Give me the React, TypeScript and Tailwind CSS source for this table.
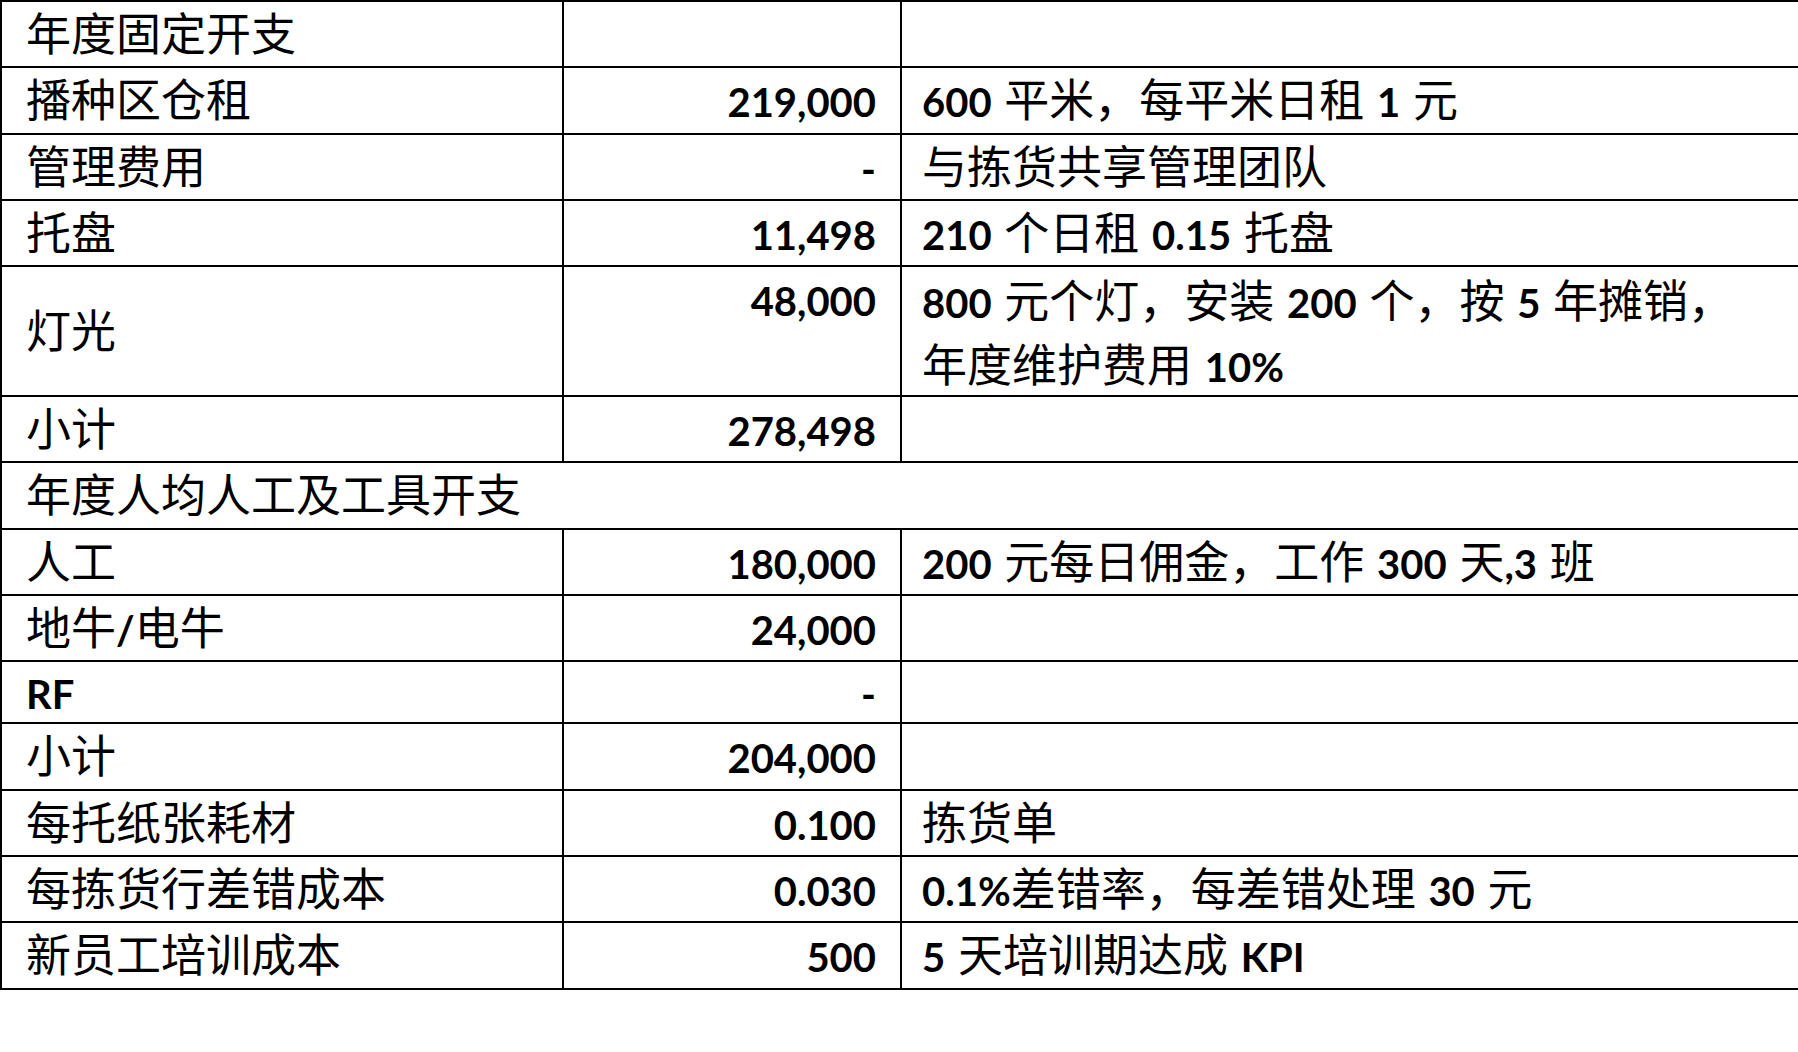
import React from "react";

type Row =
    | { kind: "item"; label: string; value?: string; note?: string[]; tight?: boolean }
    | { kind: "section"; label: string };

const rows: Row[] = [
    { kind: "item", label: "年度固定开支" },
    { kind: "item", label: "播种区仓租", value: "219,000", note: ["600 平米，每平米日租 1 元"] },
    { kind: "item", label: "管理费用", value: "-", note: ["与拣货共享管理团队"] },
    { kind: "item", label: "托盘", value: "11,498", note: ["210 个日租 0.15 托盘"] },
    {
        kind: "item",
        label: "灯光",
        value: "48,000",
        note: ["800 元个灯，安装 200 个，按 5 年摊销，", "年度维护费用 10%"],
    },
    { kind: "item", label: "小计", value: "278,498" },
    { kind: "section", label: "年度人均人工及工具开支" },
    { kind: "item", label: "人工", value: "180,000", note: ["200 元每日佣金，工作 300 天,3 班"] },
    { kind: "item", label: "地牛/电牛", value: "24,000" },
    { kind: "item", label: "RF", value: "-", tight: true },
    { kind: "item", label: "小计", value: "204,000" },
    { kind: "item", label: "每托纸张耗材", value: "0.100", note: ["拣货单"] },
    { kind: "item", label: "每拣货行差错成本", value: "0.030", note: ["0.1%差错率，每差错处理 30 元"] },
    { kind: "item", label: "新员工培训成本", value: "500", note: ["5 天培训期达成 KPI"] },
];

// latin runs use a narrower, heavier face than the CJK glyphs;
// zero line-height keeps them from stretching the row
function Mixed({ text }: { text: string }) {
    const parts = text.split(/([\x20-\x7E]+)/);
    return (
        <>
            {parts.map((p, i) =>
                i % 2 === 1 ? (
                    <span
                        key={i}
                        className="font-['Lato',sans-serif] text-[40px] leading-[0] font-bold [word-spacing:3px]"
                    >
                        {p}
                    </span>
                ) : (
                    p
                )
            )}
        </>
    );
}

export default function App() {
    return (
        <div className="w-full h-screen overflow-hidden bg-white text-black font-['Noto_Sans_CJK_SC',sans-serif] text-[45px] leading-[60.3px]">
            <table className="w-[1812px] table-fixed border-separate border-spacing-0">
                <colgroup>
                    <col className="w-[562px]" />
                    <col className="w-[338px]" />
                    <col />
                </colgroup>
                <tbody>
                    {rows.map((row, i) => {
                        const last = i === rows.length - 1;
                        const b = `border-black border-l-2 border-t-2 pb-1 ${last ? "border-b-2" : ""}`;
                        if (row.kind === "section") {
                            return (
                                <tr key={i}>
                                    <td colSpan={3} className={`${b} pl-6 whitespace-nowrap`}>
                                        {row.label}
                                    </td>
                                </tr>
                            );
                        }
                        const multi = (row.note?.length ?? 0) > 1;
                        return (
                            <tr key={i} className={row.tight ? "leading-[56px]" : ""}>
                                <td className={`${b} pl-6 align-middle whitespace-nowrap`}>
                                    <Mixed text={row.label} />
                                </td>
                                <td className={`${b} pr-6 text-right align-top whitespace-nowrap`}>
                                    {row.value ? <Mixed text={row.value} /> : null}
                                </td>
                                <td className={`${b} pl-5 align-top whitespace-nowrap ${multi ? "leading-[64px] !pb-0" : ""}`}>
                                    {row.note?.map((line, j) => (
                                        <div key={j}>
                                            <Mixed text={line} />
                                        </div>
                                    ))}
                                </td>
                            </tr>
                        );
                    })}
                </tbody>
            </table>
        </div>
    );
}
